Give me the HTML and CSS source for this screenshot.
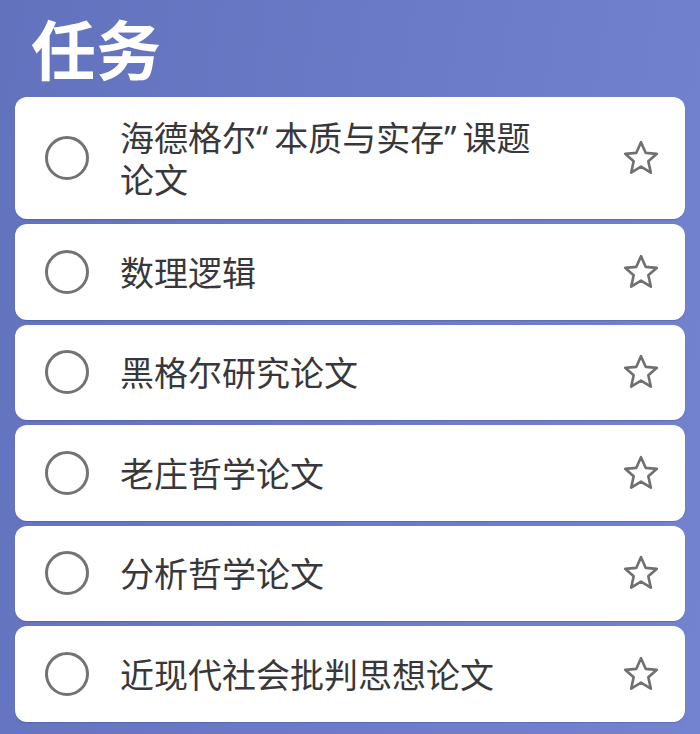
FILE: index.html
```html
<!DOCTYPE html>
<html lang="zh-CN">
<head>
    <meta charset="UTF-8">
    <meta name="viewport" content="width=device-width, initial-scale=1.0">
    <title>任务</title>
    <link rel="stylesheet" href="styles.css">
</head>
<body>
    <header class="page-title">任务</header>

    <main class="task-list">
        <div class="task">
            <span class="check"></span>
            <span class="task-text">海德格尔<span class="quote">“</span>本质与实存<span class="quote">”</span>课题论文</span>
            <svg class="star" viewBox="0 0 24 24"><polygon points="12,2.5 14.8,8.9 21.5,9.5 16.4,14 17.9,20.8 12,17.2 6.1,20.8 7.6,14 2.5,9.5 9.2,8.9"/></svg>
        </div>
        <div class="task">
            <span class="check"></span>
            <span class="task-text">数理逻辑</span>
            <svg class="star" viewBox="0 0 24 24"><polygon points="12,2.5 14.8,8.9 21.5,9.5 16.4,14 17.9,20.8 12,17.2 6.1,20.8 7.6,14 2.5,9.5 9.2,8.9"/></svg>
        </div>
        <div class="task">
            <span class="check"></span>
            <span class="task-text">黑格尔研究论文</span>
            <svg class="star" viewBox="0 0 24 24"><polygon points="12,2.5 14.8,8.9 21.5,9.5 16.4,14 17.9,20.8 12,17.2 6.1,20.8 7.6,14 2.5,9.5 9.2,8.9"/></svg>
        </div>
        <div class="task">
            <span class="check"></span>
            <span class="task-text">老庄哲学论文</span>
            <svg class="star" viewBox="0 0 24 24"><polygon points="12,2.5 14.8,8.9 21.5,9.5 16.4,14 17.9,20.8 12,17.2 6.1,20.8 7.6,14 2.5,9.5 9.2,8.9"/></svg>
        </div>
        <div class="task">
            <span class="check"></span>
            <span class="task-text">分析哲学论文</span>
            <svg class="star" viewBox="0 0 24 24"><polygon points="12,2.5 14.8,8.9 21.5,9.5 16.4,14 17.9,20.8 12,17.2 6.1,20.8 7.6,14 2.5,9.5 9.2,8.9"/></svg>
        </div>
        <div class="task">
            <span class="check"></span>
            <span class="task-text">近现代社会批判思想论文</span>
            <svg class="star" viewBox="0 0 24 24"><polygon points="12,2.5 14.8,8.9 21.5,9.5 16.4,14 17.9,20.8 12,17.2 6.1,20.8 7.6,14 2.5,9.5 9.2,8.9"/></svg>
        </div>
    </main>
</body>
</html>
```

FILE: styles.css
```css
html, body {
    height: 100%;
}

body {
    font-family: "Noto Sans CJK SC", "Noto Sans", sans-serif;
    margin: 0;
    padding: 0 15px;
    background: linear-gradient(100deg, #6372bd, #7483d0);
    overflow: hidden;
}

.page-title {
    color: white;
    font-size: 65px;
    font-weight: bold;
    line-height: 95px;
    height: 97px;
    padding-left: 16px;
}

.task-list {
    display: flex;
    flex-direction: column;
    gap: 5px;
}

.task {
    display: flex;
    align-items: center;
    background-color: white;
    border-radius: 12px;
    min-height: 95.5px;
    padding: 20px 0;
    box-sizing: border-box;
    box-shadow: 0 1px 1px rgba(40, 50, 120, 0.25);
}

.check {
    flex: none;
    width: 38px;
    height: 38px;
    border: 3px solid #737373;
    border-radius: 50%;
    margin-left: 30px;
    margin-right: 31px;
}

.task-text {
    flex: 1;
    font-size: 34px;
    line-height: 40.5px;
    color: #38383a;
    padding-right: 65px;
}

/* narrow western quotes, as in the app */
.quote {
    font-family: "Noto Sans", sans-serif;
    margin-right: 6px;
}

.star {
    flex: none;
    width: 40px;
    height: 40px;
    margin-right: 24px;
    fill: none;
    stroke: #707070;
    stroke-width: 1.6;
    stroke-linejoin: round;
}
```
